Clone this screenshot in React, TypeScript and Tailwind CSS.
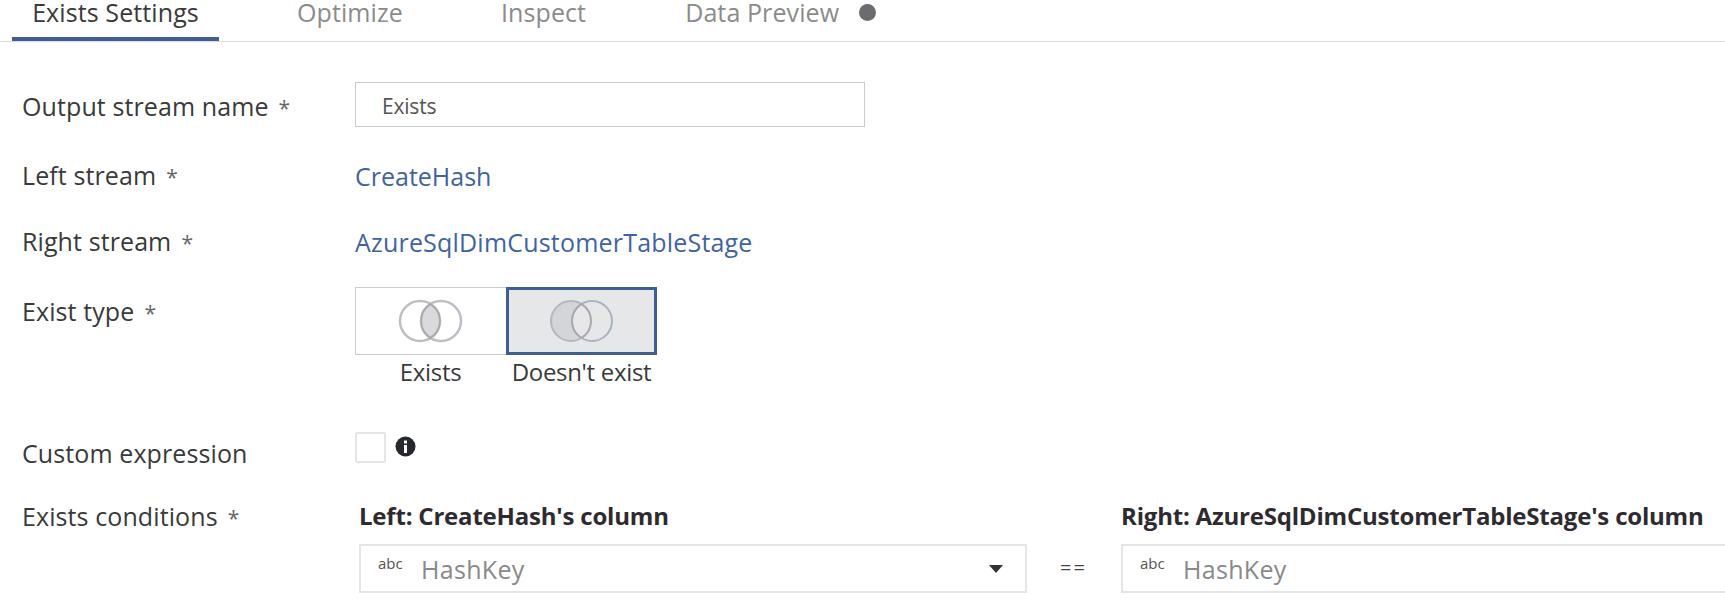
import React from 'react';

const font = { fontFamily: '"Open Sans", "Noto Sans", sans-serif' };

const FieldLabel = ({ text, required = true }: { text: string; required?: boolean }) => (
  <div className="w-[333px] shrink-0 text-[25px] leading-[32px] tracking-[0.1px] text-[#3a3a3a]">
    {text}
    {required && <span className="ml-[10px] text-[21px] text-[#666]">*</span>}
  </div>
);

const Venn = ({ selected }: { selected?: boolean }) => (
  <svg width="66" height="48" viewBox="0 0 66 48" fill="none">
    {selected ? (
      <>
        <path d="M22 4a20 20 0 1 0 0 40a20 20 0 0 0 10.5-3a20 20 0 0 1 0-34a20 20 0 0 0-10.5-3z" fill="#d3d5d8" />
        <circle cx="22" cy="24" r="20" stroke="#b4b7bb" strokeWidth="2" />
        <circle cx="43" cy="24" r="20" stroke="#a9b2c0" strokeWidth="2" />
        <path d="M32.5 7a20 20 0 0 1 0 34a20 20 0 0 1 0-34z" stroke="#aea7a3" strokeWidth="1.5" />
      </>
    ) : (
      <>
        <path d="M32.5 7a20 20 0 0 1 0 34a20 20 0 0 1 0-34z" fill="#d8dade" />
        <circle cx="22" cy="24" r="20" stroke="#bcbfc3" strokeWidth="2.5" />
        <circle cx="43" cy="24" r="20" stroke="#bcbfc3" strokeWidth="2.5" />
        <path d="M32.5 7a20 20 0 0 1 0 34a20 20 0 0 1 0-34z" stroke="#aea7a3" strokeWidth="1.5" />
      </>
    )}
  </svg>
);

const TypeOption = ({ label, selected }: { label: string; selected?: boolean }) => (
  <div className="flex w-[151px] flex-col items-center">
    <div
      className={
        selected
          ? 'flex h-[68px] w-full items-center justify-center border-[3px] border-[#3f5f92] bg-[#e6e7e9]'
          : 'flex h-[68px] w-full items-center justify-center border border-r-0 border-[#c8ccd2] bg-white'
      }
    >
      <Venn selected={selected} />
    </div>
    <div className="mt-[1px] whitespace-nowrap text-[24px] leading-[32px] tracking-[-0.3px] text-[#3a3a3a]">{label}</div>
  </div>
);

const ColumnBox = ({ caret }: { caret?: boolean }) => (
  <div className="flex h-[49px] items-center border-2 border-[#e3e5e7] bg-white pl-[17px] pr-[22px]">
    <span className="mb-[10px] w-[43px] text-[15px] leading-none text-[#555]">abc</span>
    <span className="text-[25px] leading-[32px] tracking-[0.3px] text-[#8a8a8a]">HashKey</span>
    {caret && (
      <svg className="ml-auto" width="14" height="8" viewBox="0 0 14 8">
        <path d="M0 0h14L7 8z" fill="#333" />
      </svg>
    )}
  </div>
);

export default function App() {
  return (
    <div className="h-[600px] overflow-hidden bg-white" style={font}>
      {/* Tabs */}
      <div className="flex h-[42px] items-start border-b border-[#dcdcdc] pl-[12px]">
        <div className="flex h-[41px] w-[207px] justify-center border-b-[4px] border-[#3f5f92] text-[25px] leading-[24px] tracking-[0.1px] text-[#3a3a3a]">
          Exists Settings
        </div>
        <div className="ml-[78px] flex items-center text-[25px] leading-[24px] tracking-[0.1px] text-[#8b8b8b]">
          <span>Optimize</span>
          <span className="ml-[98px]">Inspect</span>
          <span className="ml-[99px]">Data Preview</span>
          <span className="ml-[20px] h-[17px] w-[17px] rounded-full bg-[#6b6b70]" />
        </div>
      </div>

      <div className="pl-[22px]">
        {/* Output stream name */}
        <div className="mt-[40px] flex items-center">
          <div className="pt-[5px]">
            <FieldLabel text="Output stream name" />
          </div>
          <div className="flex h-[45px] w-[510px] items-center border border-[#c8ccd2] pl-[26px] pt-[4px] text-[21px] tracking-[-0.2px] text-[#555]">
            Exists
          </div>
        </div>

        {/* Streams */}
        <div className="mt-[32px] flex items-center">
          <FieldLabel text="Left stream" />
          <span className="text-[25px] leading-[32px] text-[#3f64a0]">CreateHash</span>
        </div>
        <div className="mt-[32px] flex items-center">
          <FieldLabel text="Right stream" />
          <span className="text-[25px] leading-[32px] tracking-[0.2px] text-[#3f64a0]">AzureSqlDimCustomerTableStage</span>
        </div>

        {/* Exist type */}
        <div className="mt-[28px] flex items-start">
          <div className="pt-[8px]">
            <FieldLabel text="Exist type" />
          </div>
          <div className="flex">
            <TypeOption label="Exists" />
            <TypeOption label="Doesn't exist" selected />
          </div>
        </div>

        {/* Custom expression */}
        <div className="mt-[44px] flex items-start">
          <div className="pt-[5px]">
            <FieldLabel text="Custom expression" required={false} />
          </div>
          <div className="flex items-center">
            <div className="h-[31px] w-[31px] rounded-[2px] border-2 border-[#e3e5e7]" />
            <svg className="ml-[9px] mb-[2px]" width="21" height="21" viewBox="0 0 21 21">
              <circle cx="10.5" cy="10.5" r="10" fill="#26282e" />
              <rect x="9" y="9" width="3" height="8" fill="#fff" />
              <rect x="9" y="4.5" width="3" height="3" fill="#fff" />
            </svg>
          </div>
        </div>

        {/* Exists conditions */}
        <div className="mt-[31px] flex items-start">
          <div className="w-[337px] shrink-0">
            <FieldLabel text="Exists conditions" />
          </div>
          <div className="w-[668px] shrink-0">
            <div className="text-[24px] font-bold leading-[32px] tracking-[-0.2px] text-[#2e2a30]">Left: CreateHash's column</div>
            <div className="mt-[12px]">
              <ColumnBox caret />
            </div>
          </div>
          <div className="w-[94px] shrink-0 pt-[52px] pl-[33px] text-[20px] leading-[32px] tracking-[2px] text-[#444]">==</div>
          <div className="min-w-0 flex-1 -mr-[10px]">
            <div className="whitespace-nowrap text-[24px] font-bold leading-[32px] tracking-[-0.2px] text-[#2e2a30]">Right: AzureSqlDimCustomerTableStage's column</div>
            <div className="mt-[12px]">
              <ColumnBox />
            </div>
          </div>
        </div>
      </div>
    </div>
  );
}
